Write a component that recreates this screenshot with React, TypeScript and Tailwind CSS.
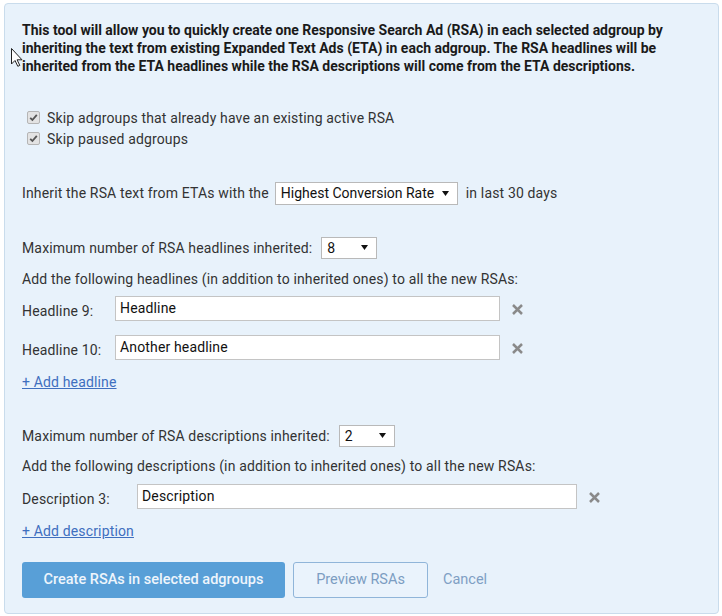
import React from "react";

const Check = () => (
  <span className="inline-flex h-[13px] w-[13px] items-center justify-center rounded-[2px] border border-[#b5b5b5] bg-[#e3e3e3]">
    <svg width="9" height="9" viewBox="0 0 9 9">
      <path d="M1.2 4.8 L3.4 7 L7.8 1.8" fill="none" stroke="#555" strokeWidth="1.8" />
    </svg>
  </span>
);

const Arrow = () => (
  <svg width="7" height="5" viewBox="0 0 7 5">
    <path d="M0 0 H7 L3.5 5 Z" fill="#111" />
  </svg>
);

const XIcon = () => (
  <svg width="11" height="11" viewBox="0 0 11 11">
    <path d="M1 1 L10 10 M10 1 L1 10" stroke="#8a8a8a" strokeWidth="2.5" strokeLinecap="butt" />
  </svg>
);

function Select({ value, w, h = "h-[22px]" }: { value: string; w: string; h?: string }) {
  return (
    <span className={`inline-flex ${w} ${h} items-center justify-between border border-[#b9b9b9] bg-white pl-[5px] pr-[8px] text-[14px] tracking-normal text-[#111]`}>
      <span>{value}</span>
      <Arrow />
    </span>
  );
}

function Field({ label, value, inputW, labelW }: { label: string; value: string; inputW: string; labelW: string }) {
  return (
    <div className="flex h-[25px] items-start">
      <span className={`${labelW} shrink-0 pt-[6px] leading-[18px] text-[#333]`}>{label}</span>
      <div className={`${inputW} h-[25px] border border-[#c4c4c4] bg-white pl-[4px] leading-[22px] text-[#111]`}>{value}</div>
      <span className="ml-[12px] mt-[8px] flex">
        <XIcon />
      </span>
    </div>
  );
}

export default function App() {
  return (
    <div className="relative h-[616px] w-[722px] bg-white pl-[4px] pt-[3px]" style={{ fontFamily: "Roboto, 'Liberation Sans', sans-serif" }}>
      <div className="h-[611px] w-[715px] rounded-[4px] border border-[#c9dcec] bg-[#e8f2fb] pl-[17px] pt-[17px] text-[14px] leading-[18px] tracking-[0.15px] text-[#333]">
        <p className="w-[670px] text-[14px] font-bold leading-[18px] tracking-normal text-[#1a1a1a]">
          This tool will allow you to quickly create one Responsive Search Ad (RSA) in each selected adgroup by inheriting the text from existing Expanded Text Ads (ETA) in each adgroup. The RSA headlines will be inherited from the ETA headlines while the RSA descriptions will come from the ETA descriptions.
        </p>

        <div className="mt-[32px] flex flex-col pl-[5px]">
          <label className="flex h-[21px] items-center gap-[7px]">
            <Check />
            <span>Skip adgroups that already have an existing active RSA</span>
          </label>
          <label className="flex h-[21px] items-center gap-[7px]">
            <Check />
            <span>Skip paused adgroups</span>
          </label>
        </div>

        <div className="mt-[32px] flex h-[24px] items-center">
          <span>Inherit the RSA text from ETAs with the</span>
          <span className="ml-[6px] flex">
            <Select value="Highest Conversion Rate" w="w-[183px]" h="h-[23px]" />
          </span>
          <span className="ml-[8px]">in last 30 days</span>
        </div>

        <div className="mt-[31px] flex h-[23px] items-center">
          <span>Maximum number of RSA headlines inherited:</span>
          <span className="ml-[9px] flex">
            <Select value="8" w="w-[56px]" />
          </span>
        </div>

        <p className="mt-[11px] leading-[18px]">Add the following headlines (in addition to inherited ones) to all the new RSAs:</p>

        <div className="mt-[8px] flex flex-col gap-[14px]">
          <Field label="Headline 9:" value="Headline" labelW="w-[93px]" inputW="w-[385px]" />
          <Field label="Headline 10:" value="Another headline" labelW="w-[93px]" inputW="w-[385px]" />
        </div>

        <a className="mt-[13px] block w-fit leading-[18px] text-[#3f6fbf] underline">+ Add headline</a>

        <div className="mt-[33px] flex h-[23px] items-center">
          <span>Maximum number of RSA descriptions inherited:</span>
          <span className="ml-[9px] flex">
            <Select value="2" w="w-[56px]" />
          </span>
        </div>

        <p className="mt-[10px] leading-[18px]">Add the following descriptions (in addition to inherited ones) to all the new RSAs:</p>

        <div className="mt-[9px]">
          <Field label="Description 3:" value="Description" labelW="w-[115px]" inputW="w-[440px]" />
        </div>

        <a className="mt-[13px] block w-fit leading-[18px] text-[#3f6fbf] underline">+ Add description</a>

        <div className="mt-[22px] flex items-center tracking-normal">
          <button className="h-[36px] w-[263px] rounded-[3px] bg-[#589fd7] text-[14.5px] font-medium text-[#eef5fc]">
            Create RSAs in selected adgroups
          </button>
          <button className="ml-[8px] h-[36px] w-[135px] rounded-[3px] border border-[#90b5d9] bg-[#eaf3fc] text-[14.5px] text-[#7c9dc2]">
            Preview RSAs
          </button>
          <span className="ml-[15px] text-[14.5px] text-[#7f9fc4]">Cancel</span>
        </div>
      </div>

      <svg className="absolute left-[11px] top-[48px]" width="12" height="19" viewBox="0 0 12 19">
        <path d="M0.5 0.5 V16 L4 12.5 L6.8 18.3 L8.8 17.4 L6.1 11.8 H11 Z" fill="white" stroke="#222" strokeWidth="1" />
      </svg>
    </div>
  );
}
